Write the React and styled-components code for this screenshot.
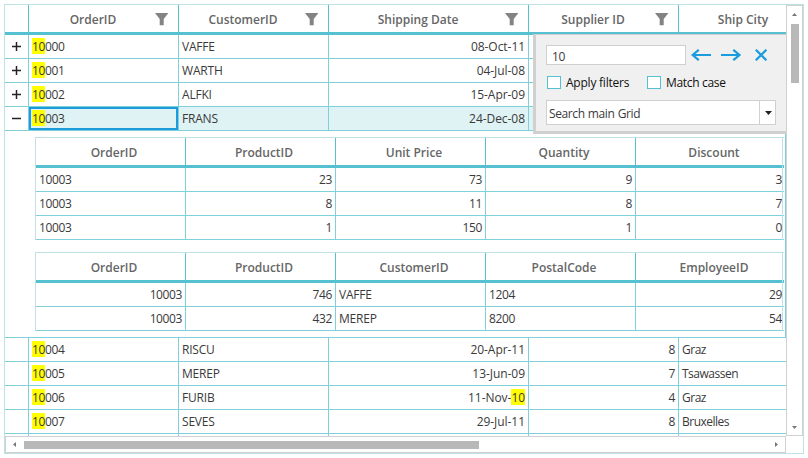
import React from 'react';
import styled, { createGlobalStyle, css } from 'styled-components';

const c = {
  line: '#7fd0da',
  strong: '#54c0d0',
  edge: '#bfe1e3',
  bar: '#d0d0d0',
  thumb: '#b8b8b8',
  text: '#3a3a3a',
  head: '#666666',
  blue: '#1b9cdc',
  selected: '#dff2f4',
};

const GlobalStyle = createGlobalStyle`
  * { box-sizing: border-box; }
  html, body { margin: 0; background: #fff; }
  body {
    font: 12px/16px "Open Sans", "Noto Sans", sans-serif;
    color: ${c.text};
    overflow: hidden;
  }
  svg { display: block; }
`;

const Frame = styled.div`
  width: 800px;
  height: 450px;
  margin: 4px;
  border: 1px solid ${c.edge};
  display: grid;
  grid-template-columns: 781px 17px;
  grid-template-rows: 431px 17px;
`;

const Viewport = styled.div`
  position: relative;
  overflow: hidden;
`;

const HeaderRow = styled.div`
  display: grid;
  grid-template-columns: ${(p) => p.$cols};
  height: ${(p) => p.$h}px;
  border-bottom: 3px solid ${c.strong};
  width: max-content;
`;

const HeaderCell = styled.div`
  display: flex;
  align-items: center;
  border-right: 1px solid ${c.strong};
  color: ${c.head};
  font-weight: 600;
  padding-left: ${(p) => p.$indent || 0}px;
  padding-top: 2px;
  letter-spacing: 0;
  white-space: nowrap;
`;

const HeaderLabel = styled.span`
  flex: 1;
  text-align: center;
`;

const FilterSlot = styled.span`
  width: 23px;
`;

const Row = styled.div`
  display: grid;
  grid-template-columns: ${(p) => p.$cols};
  height: 24px;
  width: max-content;
`;

const Cell = styled.div`
  border-right: 1px solid ${c.line};
  border-bottom: 1px solid ${c.line};
  padding: 4px 3px 0;
  text-align: ${(p) => (p.$right ? 'right' : 'left')};
  letter-spacing: ${(p) => p.$ls}px;
  white-space: nowrap;
  background: ${(p) => (p.$selected ? c.selected : 'transparent')};
  ${(p) =>
    p.$focused &&
    css`
      box-shadow: inset 0 0 0 2px ${c.blue};
    `}
`;

const ToggleCell = styled.div`
  border-right: 1px solid ${c.line};
  border-bottom: 1px solid ${c.line};
  padding: 7px 0 0 7px;
`;

const Mark = styled.mark`
  background: linear-gradient(#ffff00, #ffff00) 0 0 / 100% 100% no-repeat;
  display: inline-block;
  height: 16px;
  margin-top: -1px;
  line-height: 18px;
  vertical-align: top;
  color: inherit;
`;

const Detail = styled.div`
  height: 207px;
  padding: 6px 0 0 30px;
  border-right: 1px solid ${c.line};
  border-bottom: 1px solid ${c.line};
`;

const SubGrid = styled.div`
  position: relative;
  width: 749px;
  margin-bottom: 12px;
  border-left: 1px solid ${c.edge};
  border-top: 1px solid ${c.edge};
  overflow: hidden;
`;

const SubEdge = styled.div`
  position: absolute;
  top: 0;
  bottom: 0;
  right: 1px;
  width: 1px;
  background: ${c.edge};
`;

const SearchPanel = styled.form`
  position: absolute;
  left: 528px;
  top: 29px;
  width: 253px;
  height: 100px;
  padding: 10px 0 0 10px;
  background: #f0f0f0;
  border: solid ${c.bar};
  border-width: 1px 0 3px 3px;
  color: #111;
`;

const SearchLine = styled.div`
  display: flex;
  align-items: center;
  height: 20px;
`;

const QueryBox = styled.div`
  width: 140px;
  height: 20px;
  padding: 3px 5px 0;
  background: #fff;
  border: 1px solid ${c.bar};
  letter-spacing: -0.39px;
  line-height: 16px;
  color: ${c.text};
`;

const Actions = styled.div`
  display: flex;
  padding-left: 5px;
`;

const CheckLine = styled.div`
  display: flex;
  align-items: center;
  height: 18px;
  margin-top: 8px;
  padding-left: 1px;
`;

const CheckItem = styled.label`
  display: flex;
  align-items: center;
  gap: 5px;
  width: 100px;
  white-space: nowrap;
  letter-spacing: ${(p) => p.$ls}px;
`;

const CheckText = styled.span`
  padding-top: 2px;
`;

const CheckBox = styled.span`
  width: 14px;
  height: 13px;
  background: #fff;
  border: 1px solid ${c.strong};
`;

const Combo = styled.div`
  display: grid;
  grid-template-columns: 1fr 16px;
  width: 230px;
  height: 25px;
  margin-top: 9px;
  background: #fff;
  border: 1px solid ${c.bar};
`;

const ComboText = styled.span`
  padding: 5px 2px 0;
  letter-spacing: -0.38px;
  word-spacing: 0.4px;
  color: ${c.text};
`;

const ComboButton = styled.span`
  border-left: 1px solid ${c.bar};
  padding: 10px 0 0 5px;
`;

const VBar = styled.div`
  display: flex;
  flex-direction: column;
  align-items: center;
  border: 1px solid ${c.bar};
  padding: 7px 0 6px;
`;

const VThumb = styled.div`
  width: 8px;
  height: 59px;
  margin: 8px 0 auto;
  background: ${c.thumb};
`;

const HBar = styled.div`
  display: flex;
  align-items: center;
  border: 1px solid ${c.bar};
  padding: 0 7px;
`;

const HThumb = styled.div`
  width: 455px;
  height: 8px;
  margin: 0 auto 0 8px;
  background: ${c.thumb};
`;

const Funnel = () => (
  <svg width="14" height="13" viewBox="0 0 14 13">
    <path d="M0 0h13.4L8.7 6v6.2h-4V6z" fill="#838383" />
  </svg>
);

const Toggle = ({ open }) => (
  <svg width="9" height="9" viewBox="0 0 9 9" stroke="#222" strokeWidth="1.5">
    <path d={open ? 'M0 4.5h9' : 'M0 4.5h9M4.5 0v9'} />
  </svg>
);

const Triangle = ({ w, h, d, fill = '#777' }) => (
  <svg width={w} height={h} viewBox={`0 0 ${w} ${h}`}>
    <path d={d} fill={fill} />
  </svg>
);

const ActionIcon = ({ w, d }) => (
  <svg width={w} height="12" viewBox={`0 0 ${w} 12`} fill="none" stroke={c.blue} strokeWidth="2.2">
    <path d={d} />
  </svg>
);

const Highlighted = ({ text, query }) => {
  const at = text.indexOf(query);
  if (at < 0) return text;
  return (
    <>
      {text.slice(0, at)}
      <Mark>{query}</Mark>
      {text.slice(at + query.length)}
    </>
  );
};

// Tracking differs for plain numbers, dates, codes in capitals and names.
const tracking = (text) => {
  if (/^\d*$/.test(text)) return -0.39;
  if (/^\d/.test(text)) return -0.05;
  if (/^[A-Z]+$/.test(text)) return -0.2;
  return -0.5;
};

const MAIN_COLS = '24px 150px 150px 200px 150px 150px';
const SUB_COLS = '150px 150px 150px 150px 150px';

const headers = ['OrderID', 'CustomerID', 'Shipping Date', 'Supplier ID', 'Ship City'];

const topRows = [
  ['10000', 'VAFFE', '08-Oct-11'],
  ['10001', 'WARTH', '04-Jul-08'],
  ['10002', 'ALFKI', '15-Apr-09'],
  ['10003', 'FRANS', '24-Dec-08'],
];

const bottomRows = [
  ['10004', 'RISCU', '20-Apr-11', '8', 'Graz'],
  ['10005', 'MEREP', '13-Jun-09', '7', 'Tsawassen'],
  ['10006', 'FURIB', '11-Nov-10', '4', 'Graz'],
  ['10007', 'SEVES', '29-Jul-11', '8', 'Bruxelles'],
  ['', '', '', '', ''],
];

const products = {
  headers: ['OrderID', 'ProductID', 'Unit Price', 'Quantity', 'Discount'],
  left: [0],
  rows: [
    ['10003', '23', '73', '9', '3'],
    ['10003', '8', '11', '8', '7'],
    ['10003', '1', '150', '1', '0'],
  ],
};

const customers = {
  headers: ['OrderID', 'ProductID', 'CustomerID', 'PostalCode', 'EmployeeID'],
  left: [2, 3],
  rows: [
    ['10003', '746', 'VAFFE', '1204', '29'],
    ['10003', '432', 'MEREP', '8200', '54'],
  ],
};

const GridRow = ({ values, toggle, selected }) => (
  <Row $cols={MAIN_COLS}>
    <ToggleCell>{toggle && <Toggle open={toggle === 'open'} />}</ToggleCell>
    {headers.map((h, i) => {
      const text = values[i] || '';
      return (
        <Cell
          key={h}
          $ls={tracking(text)}
          $right={i === 2 || i === 3}
          $selected={selected}
          $focused={selected && i === 0}
        >
          {i === 0 || i === 2 ? <Highlighted text={text} query="10" /> : text}
        </Cell>
      );
    })}
  </Row>
);

const NestedGrid = ({ data }) => (
  <SubGrid>
    <SubEdge />
    <HeaderRow $cols={SUB_COLS} $h={30}>
      {data.headers.map((h) => (
        <HeaderCell key={h} $indent={7}>
          <HeaderLabel>{h}</HeaderLabel>
        </HeaderCell>
      ))}
    </HeaderRow>
    {data.rows.map((row, r) => (
      <Row key={r} $cols={SUB_COLS}>
        {row.map((v, i) => (
          <Cell key={i} $ls={tracking(v)} $right={!data.left.includes(i)}>
            {v}
          </Cell>
        ))}
      </Row>
    ))}
  </SubGrid>
);

export default function App() {
  return (
    <>
      <GlobalStyle />
      <Frame>
        <Viewport>
          <HeaderRow $cols={MAIN_COLS} $h={30}>
            <HeaderCell />
            {headers.map((h) => (
              <HeaderCell key={h} $indent={2}>
                <HeaderLabel>{h}</HeaderLabel>
                <FilterSlot>
                  <Funnel />
                </FilterSlot>
              </HeaderCell>
            ))}
          </HeaderRow>
          {topRows.map((r, i) => (
            <GridRow key={r[0]} values={r} toggle={i === 3 ? 'open' : 'closed'} selected={i === 3} />
          ))}
          <Detail>
            <NestedGrid data={products} />
            <NestedGrid data={customers} />
          </Detail>
          {bottomRows.map((r, i) => (
            <GridRow key={i} values={r} />
          ))}
          <SearchPanel>
            <SearchLine>
              <QueryBox>10</QueryBox>
              <Actions>
                <ActionIcon w={30} d="M20 6H1.5M7.8 .8L1.6 6l6.2 5.2" />
                <ActionIcon w={34} d="M0 6h18.5M12.3 .8L18.5 6l-6.2 5.2" />
                <ActionIcon w={14} d="M.8 .7l10.6 10.6M11.4 .7L.8 11.3" />
              </Actions>
            </SearchLine>
            <CheckLine>
              <CheckItem $ls={-0.23}>
                <CheckBox />
                <CheckText>Apply filters</CheckText>
              </CheckItem>
              <CheckItem $ls={-0.33}>
                <CheckBox />
                <CheckText>Match case</CheckText>
              </CheckItem>
            </CheckLine>
            <Combo>
              <ComboText>Search main Grid</ComboText>
              <ComboButton>
                <Triangle w={7} h={4} d="M0 0h7L3.5 4z" fill="#222" />
              </ComboButton>
            </Combo>
          </SearchPanel>
        </Viewport>
        <VBar>
          <Triangle w={5} h={3} d="M0 3h5L2.5 0z" />
          <VThumb />
          <Triangle w={5} h={3} d="M0 0h5L2.5 3z" />
        </VBar>
        <HBar>
          <Triangle w={3} h={5} d="M3 0v5L0 2.5z" />
          <HThumb />
          <Triangle w={3} h={5} d="M0 0v5L3 2.5z" />
        </HBar>
      </Frame>
    </>
  );
}
